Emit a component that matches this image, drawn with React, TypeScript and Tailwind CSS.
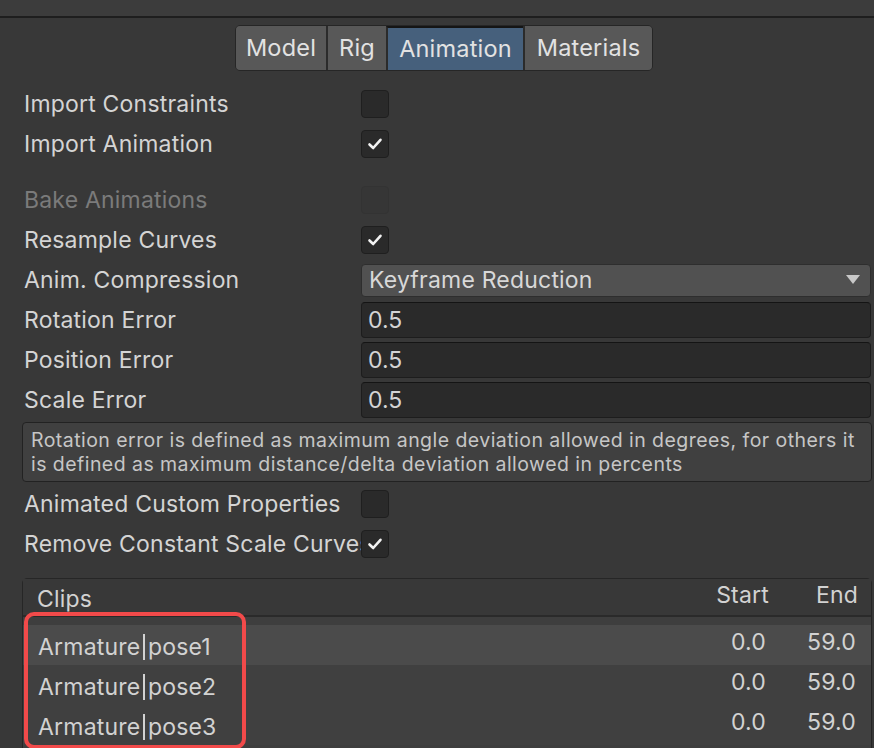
import type { ReactNode } from 'react';

const Check = () => (
  <svg width="18" height="18" viewBox="0 0 18 18" fill="none">
    <path
      d="M3.5 9.5 L7.2 13 L14.5 4.8"
      stroke="#f2f2f2"
      strokeWidth="2.6"
      strokeLinecap="round"
      strokeLinejoin="round"
    />
  </svg>
);

const Checkbox = ({ checked, disabled }: { checked?: boolean; disabled?: boolean }) => (
  <div
    className={`flex h-[28px] w-[28px] items-center justify-center rounded-[4px] border ${
      disabled
        ? 'border-[#333333] bg-[#363636]'
        : 'border-[#1f1f1f] bg-[#2a2a2a]'
    }`}
  >
    {checked && <Check />}
  </div>
);

const Row = ({
  label,
  disabled,
  children,
}: {
  label: string;
  disabled?: boolean;
  children: ReactNode;
}) => (
  <div className="flex h-[40px] items-center">
    <div
      className={`w-[337px] overflow-hidden whitespace-nowrap text-[23px] tracking-[0.2px] ${
        disabled ? 'text-[#7b7b7b]' : 'text-[#d4d4d4]'
      }`}
    >
      {label}
    </div>
    <div className="flex flex-1 items-center">{children}</div>
  </div>
);

const NumberField = ({ value }: { value: string }) => (
  <div className="ml-[1px] flex h-[36px] w-[510px] items-center rounded-[4px] border border-[#1d1d1d] border-t-[#141414] bg-[#2a2a2a] px-[6px] text-[23px] text-[#d4d4d4]">
    {value}
  </div>
);

const tabs = [
  { name: 'Model', w: 'w-[90px]' },
  { name: 'Rig', w: 'w-[60px]' },
  { name: 'Animation', w: 'w-[137px]' },
  { name: 'Materials', w: 'w-[129px]' },
];

const clips = ['pose1', 'pose2', 'pose3'];

const App = () => {
  return (
    <div className="h-[748px] w-[874px] overflow-hidden bg-[#383838] font-['Inter','Noto_Sans',sans-serif]">
      <div className="h-[18px] border-b-2 border-[#1e1e1e] bg-[#3c3c3c]" />

      <div className="ml-[235px] mt-[7px] flex h-[46px] w-fit overflow-hidden rounded-[5px] border border-[#262626] text-[23.5px] tracking-[0.2px] text-[#e2e2e2]">
        {tabs.map((tab, i) => (
          <div
            key={tab.name}
            className={`flex items-center justify-center ${tab.w} ${
              i > 0 ? 'border-l-2 border-[#2b2b2b]' : ''
            } ${
              tab.name === 'Animation'
                ? 'border-t-2 border-t-[#151515] bg-[#46607c]'
                : 'bg-[#585858]'
            }`}
          >
            {tab.name}
          </div>
        ))}
      </div>

      <div className="mt-[13px] pl-[24px] pr-[3px]">
        <Row label="Import Constraints">
          <Checkbox />
        </Row>
        <Row label="Import Animation">
          <Checkbox checked />
        </Row>
        <div className="h-[16px]" />
        <Row label="Bake Animations" disabled>
          <Checkbox disabled />
        </Row>
        <Row label="Resample Curves">
          <Checkbox checked />
        </Row>
        <Row label="Anim. Compression">
          <div className="ml-[1px] flex h-[33px] w-[510px] items-center justify-between rounded-[4px] border border-[#2e2e2e] bg-[#515151] pl-[7px] pr-[10px] text-[23px] tracking-[0.2px] text-[#d8d8d8]">
            <span>Keyframe Reduction</span>
            <svg width="14" height="10" viewBox="0 0 14 10">
              <path d="M0 0 H14 L7 9 Z" fill="#c8c8c8" />
            </svg>
          </div>
        </Row>
        <Row label="Rotation Error">
          <NumberField value="0.5" />
        </Row>
        <Row label="Position Error">
          <NumberField value="0.5" />
        </Row>
        <Row label="Scale Error">
          <NumberField value="0.5" />
        </Row>
      </div>

      <div className="ml-[22px] mt-[2px] h-[60px] w-[850px] whitespace-nowrap rounded-[4px] border border-[#222222] bg-[#404040] px-[8px] pt-[5px] text-[19.5px] leading-[24px] tracking-[0.45px] text-[#c6c6c6]">
        Rotation error is defined as maximum angle deviation allowed in degrees, for others it
        <br />
        is defined as maximum distance/delta deviation allowed in percents
      </div>

      <div className="mt-[2px] pl-[24px]">
        <Row label="Animated Custom Properties">
          <Checkbox />
        </Row>
        <Row label="Remove Constant Scale Curves">
          <Checkbox checked />
        </Row>
      </div>

      <div className="relative ml-[22px] mt-[14px] h-[200px] w-[850px] rounded-t-[5px] border border-[#262626] bg-[#3e3e3e]">
        <div className="flex h-[38px] items-center border-b-2 border-[#2a2a2a] bg-[#383838] text-[23px] tracking-[0.2px] text-[#d2d2d2]">
          <span className="flex-1 pl-[14px] pt-[4px]">Clips</span>
          <span className="pb-[4px] text-right">Start</span>
          <span className="w-[102px] pb-[4px] pr-[13px] text-right">End</span>
        </div>
        <div className="h-[8px]" />
        {clips.map((c, i) => (
          <div
            key={c}
            className={`flex h-[40px] items-center text-[23px] tracking-[0.2px] text-[#d2d2d2] ${
              i === 0 ? 'bg-[#4b4b4b]' : 'bg-[#404040]'
            }`}
          >
            <span className="flex-1 pl-[15px] pt-[4px]">
              Armature
              <span className="mx-[3px] inline-block h-[26px] w-[1.5px] translate-y-[5px] bg-[#d2d2d2]" />
              {c}
            </span>
            <span className="pb-[6px] text-right">0.0</span>
            <span className="w-[105px] pb-[6px] pr-[15px] text-right">59.0</span>
          </div>
        ))}
        <div className="absolute left-[1px] top-[33px] h-[137px] w-[222px] rounded-[10px] border-4 border-[#f24a4a]" />
      </div>
    </div>
  );
};

export default App;
